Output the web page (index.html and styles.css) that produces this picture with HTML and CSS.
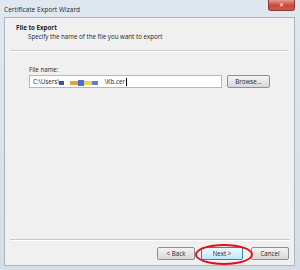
FILE: index.html
```html
<!DOCTYPE html>
<html lang="en">
<head>
<meta charset="UTF-8">
<title>Certificate Export Wizard</title>
<link rel="stylesheet" href="styles.css">
</head>
<body>

<div class="window">
  <div class="titlebar">
    <span class="title">Certificate Export Wizard</span>
    <span class="close">&#x2715;</span>
  </div>

  <div class="client">
    <div class="header">
      <div class="header-title">File to Export</div>
      <div class="header-sub">Specify the name of the file you want to export</div>
    </div>
    <div class="rule top-rule"></div>

    <div class="content">
      <div class="label">File name:</div>
      <div class="file-row">
        <div class="input"><span>C:\Users\</span><span class="blot b1"></span><span class="blot b2"></span><span class="blot b3"></span><span class="blot b4"></span><span class="blot b5"></span><span class="blot b6"></span><span class="blot b2"></span><span>\Kb.cer</span><span class="caret"></span></div>
        <button class="btn browse">Browse...</button>
      </div>
    </div>

    <div class="rule bottom-rule"></div>
    <div class="footer">
      <button class="btn">&lt; Back</button>
      <button class="btn next">Next &gt;</button>
      <button class="btn cancel">Cancel</button>
    </div>
  </div>
</div>

</body>
</html>
```

FILE: styles.css
```css
body {
  margin: 0;
  font-family: "Open Sans", "DejaVu Sans", sans-serif;
  font-size: 6.2px;
  color: #1e1e1e;
}
.window {
  width: 300px;
  height: 270px;
  background: linear-gradient(#dfe8f1, #d3dee9);
  display: flex;
  flex-direction: column;
  box-sizing: border-box;
}
.titlebar {
  height: 17px;
  display: flex;
  align-items: center;
  justify-content: space-between;
  padding-left: 4px;
}
.title {
  font-size: 6.6px;
  color: #2a2a2a;
  margin-top: 1px;
}
.close {
  width: 27px;
  height: 11px;
  align-self: flex-start;
  margin-right: 5px;
  background: linear-gradient(#e69a8e, #c9463a 55%, #d3584a);
  border: 1px solid #8d3a32;
  border-top: none;
  border-radius: 0 0 3px 3px;
  color: #fff;
  font-size: 6px;
  font-weight: bold;
  display: flex;
  align-items: center;
  justify-content: center;
  box-sizing: border-box;
}
.client {
  flex: 1;
  margin: 0 5px 4px 4px;
  background: #f0f0f0;
  border: 1px solid #a9b6c3;
  display: flex;
  flex-direction: column;
}
.header {
  height: 32px;
  padding: 5px 0 0 11px;
  box-sizing: border-box;
}
.header-title {
  font-weight: bold;
  line-height: 9px;
}
.header-sub {
  padding-left: 12px;
  line-height: 9px;
}
.rule {
  height: 1px;
  background: #c9c9c9;
  border-bottom: 1px solid #fff;
}
.top-rule {
  margin: 0 6px 0 5px;
}
.content {
  flex: 1;
  padding: 13px 0 0 24px;
}
.label {
  line-height: 9px;
  margin-bottom: 1px;
}
.file-row {
  display: flex;
  align-items: center;
  gap: 5px;
}
.input {
  width: 193px;
  height: 13px;
  box-sizing: border-box;
  border: 1px solid #a7bad0;
  background: #fff;
  padding-left: 3px;
  display: flex;
  align-items: center;
  white-space: pre;
}
.blot {
  display: inline-block;
  height: 4px;
  margin-top: 2px;
}
.b1 { width: 5px; background: #3c4fb0; }
.b2 { width: 6px; background: #fff; }
.b3 { width: 8px; background: #e6a23a; }
.b4 { width: 6px; background: #4a6ed0; height: 6px; }
.b5 { width: 8px; background: #f2d24a; }
.b6 { width: 6px; background: #5a7fe0; }
.caret {
  display: inline-block;
  width: 1px;
  height: 8px;
  background: #000;
  margin-left: 1px;
}
.btn {
  font-family: inherit;
  font-size: 6.2px;
  color: #1e1e1e;
  height: 13px;
  padding: 0;
  border: 1px solid #8e8f8f;
  border-radius: 2px;
  background: linear-gradient(#f4f4f4, #e6e6e6 50%, #d8d8d8);
}
.browse {
  width: 43px;
}
.bottom-rule {
  margin: 0 4px 0 5px;
}
.footer {
  height: 24px;
  display: flex;
  align-items: center;
  justify-content: flex-end;
  padding-right: 5px;
  gap: 6px;
}
.footer .btn {
  width: 38px;
}
.next {
  width: 42px !important;
  background: linear-gradient(#eaf6fd, #d9f0fc 50%, #bee6fd);
  border-color: #3c7fb1;
  position: relative;
  margin-right: 2px;
}
.next::after {
  content: "";
  position: absolute;
  left: -7px;
  top: -4px;
  width: 54px;
  height: 17px;
  border: 2px solid #e0101a;
  border-radius: 50%;
}
```
